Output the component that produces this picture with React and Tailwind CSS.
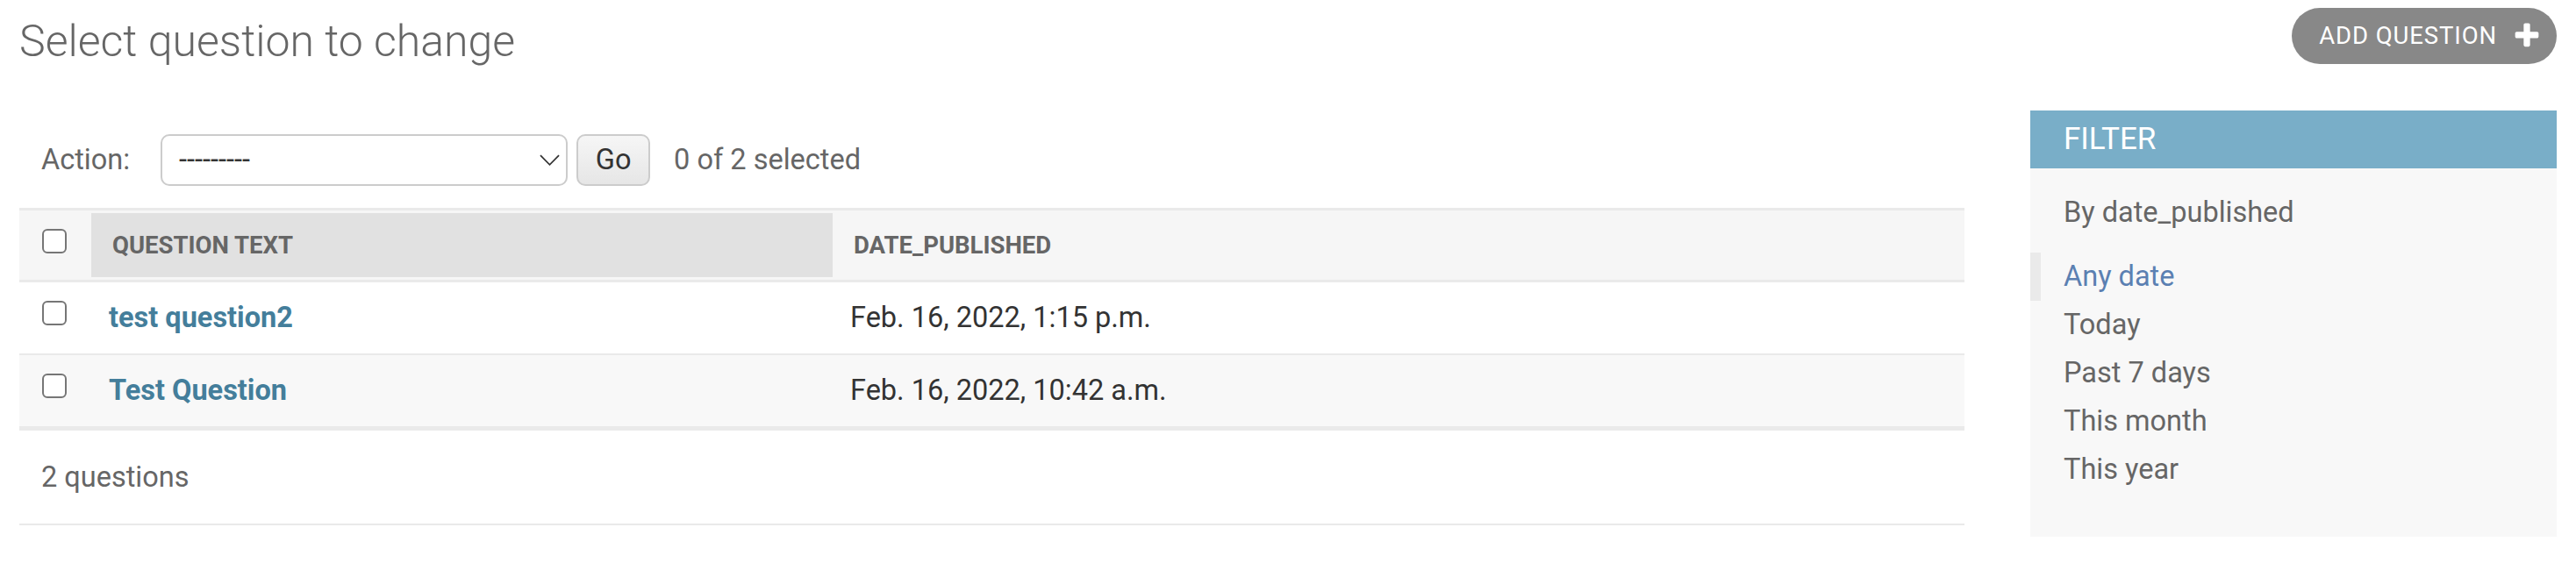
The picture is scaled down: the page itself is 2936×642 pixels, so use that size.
const rows = [
  { text: "test question2", date: "Feb. 16, 2022, 1:15 p.m.", bg: "bg-white", border: "border-b-2 h-[83px]" },
  { text: "Test Question", date: "Feb. 16, 2022, 10:42 a.m.", bg: "bg-[#f8f8f8]", border: "border-b-[3px] h-[84px]" },
];

const filters = ["Any date", "Today", "Past 7 days", "This month", "This year"];

function Checkbox() {
  return <div className="w-[28px] h-[28px] rounded-[6px] border-2 border-[#767676] bg-white" />;
}

function PlusIcon() {
  return (
    <svg viewBox="0 0 1792 1792" className="w-[34px] h-[34px]">
      <path
        fill="#fff"
        d="M1600 736v192q0 40-28 68t-68 28h-416v416q0 40-28 68t-68 28h-192q-40 0-68-28t-28-68v-416h-416q-40 0-68-28t-28-68v-192q0-40 28-68t68-28h416v-416q0-40 28-68t68-28h192q40 0 68 28t28 68v416h416q40 0 68 28t28 68z"
      />
    </svg>
  );
}

// native-looking select arrow
function SelectArrow() {
  return (
    <svg viewBox="0 0 24 13" className="w-[23px] h-[13px]">
      <polyline points="1,1 12,12 23,1" fill="none" stroke="#333" strokeWidth="1.8" />
    </svg>
  );
}

export default function App() {
  return (
    <div className="w-[2936px] h-[642px] bg-white px-[22px] font-[family-name:Roboto,sans-serif] text-[#333]">
      {/* Header */}
      <div className="h-[126px] flex items-start justify-between">
        <h1 className="mt-[17px] text-[50px] leading-[60px] font-light text-[#666]">
          Select question to change
        </h1>
        <a className="mt-[9px] h-[64px] flex items-center rounded-full bg-[#888] pl-[31px] pr-[17px] gap-[17px] text-white text-[27.5px] tracking-[0.9px] uppercase">
          Add question
          <PlusIcon />
        </a>
      </div>

      <div className="flex items-start">
        {/* Results */}
        <div className="flex-1 min-w-0">
          <div className="h-[111px] pt-[27px] pl-[25px]">
            <div className="h-[59px] flex items-center text-[32.5px]">
              <label className="text-[#666]">Action:</label>
              <div className="ml-[35px] w-[464px] h-[59px] flex items-center justify-between border-2 border-[#cccccc] rounded-[10px] bg-white pl-[19px] pr-[7px]">
                <span className="text-[#333] text-[32.5px]">---------</span>
                <SelectArrow />
              </div>
              <button className="ml-[10px] w-[84px] h-[59px] border-2 border-[#cccccc] rounded-[10px] bg-gradient-to-b from-[#f6f6f6] to-[#e6e6e6] text-[#333] text-[32.5px]">
                Go
              </button>
              <span className="ml-[27px] text-[#666]">0 of 2 selected</span>
            </div>
          </div>

          {/* Table head */}
          <div className="h-[85px] flex border-y-[3px] border-[#eaeaea] bg-[#f6f6f6]">
            <div className="w-[82px] pl-[26px] pt-[21px]">
              <Checkbox />
            </div>
            <div className="w-[845px] my-[3px] bg-[#e1e1e1] flex items-center pl-[24px] text-[27.5px] font-bold text-[#666] uppercase">
              Question text
            </div>
            <div className="flex-1 flex items-center pl-[24px] text-[27.5px] font-bold text-[#666] uppercase">
              Date_published
            </div>
          </div>

          {/* Rows */}
          {rows.map((r) => (
            <div key={r.text} className={`flex border-[#eaeaea] ${r.bg} ${r.border}`}>
              <div className="w-[82px] pl-[26px] pt-[21px]">
                <Checkbox />
              </div>
              <div className="w-[845px] flex items-center pl-[20px] text-[32.5px] font-bold text-[#447e9b]">
                {r.text}
              </div>
              <div className="flex-1 flex items-center pl-[20px] text-[32.5px] text-[#333]">
                {r.date}
              </div>
            </div>
          ))}

          {/* Paginator */}
          <div className="h-[110px] flex items-center pl-[25px] border-t-2 border-b-2 border-[#eaeaea] text-[32.5px] text-[#666]">
            2 questions
          </div>
        </div>

        {/* Filter */}
        <div className="w-[600px] ml-[75px] bg-[#f8f8f8] pb-[49px]">
          <h2 className="h-[66px] flex items-center bg-[#79aec8] pl-[38px] text-[35px] text-white uppercase">
            Filter
          </h2>
          <h3 className="mt-[30px] pl-[38px] text-[32.5px] leading-[40px] text-[#666]">
            By date_published
          </h3>
          <ul className="mt-[26px]">
            {filters.map((f, i) => (
              <li
                key={f}
                className={`h-[55px] leading-[55px] text-[32.5px] ${
                  i === 0
                    ? "border-l-[12px] border-[#eaeaea] pl-[26px] text-[#5b80b2]"
                    : "pl-[38px] text-[#666]"
                }`}
              >
                {f}
              </li>
            ))}
          </ul>
        </div>
      </div>
    </div>
  );
}
